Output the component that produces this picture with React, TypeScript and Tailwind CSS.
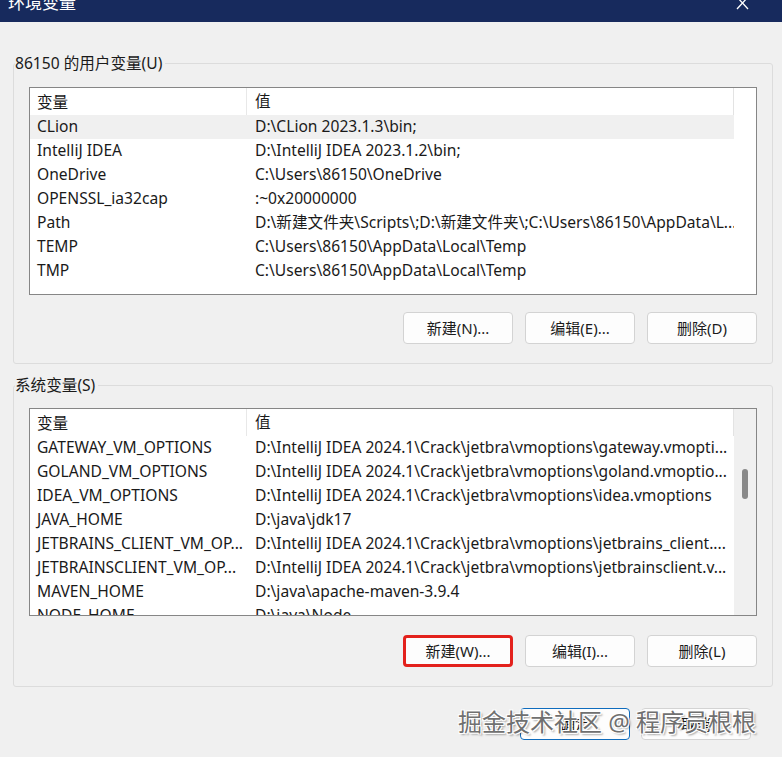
import type {ReactNode} from 'react'

type Row = [string, string]

const userVars: Row[] = [
  ['CLion', 'D:\\CLion 2023.1.3\\bin;'],
  ['IntelliJ IDEA', 'D:\\IntelliJ IDEA 2023.1.2\\bin;'],
  ['OneDrive', 'C:\\Users\\86150\\OneDrive'],
  ['OPENSSL_ia32cap', ':~0x20000000'],
  ['Path', 'D:\\新建文件夹\\Scripts\\;D:\\新建文件夹\\;C:\\Users\\86150\\AppData\\L...'],
  ['TEMP', 'C:\\Users\\86150\\AppData\\Local\\Temp'],
  ['TMP', 'C:\\Users\\86150\\AppData\\Local\\Temp'],
]

const systemVars: Row[] = [
  ['GATEWAY_VM_OPTIONS', 'D:\\IntelliJ IDEA 2024.1\\Crack\\jetbra\\vmoptions\\gateway.vmopti...'],
  ['GOLAND_VM_OPTIONS', 'D:\\IntelliJ IDEA 2024.1\\Crack\\jetbra\\vmoptions\\goland.vmoptio...'],
  ['IDEA_VM_OPTIONS', 'D:\\IntelliJ IDEA 2024.1\\Crack\\jetbra\\vmoptions\\idea.vmoptions'],
  ['JAVA_HOME', 'D:\\java\\jdk17'],
  ['JETBRAINS_CLIENT_VM_OP...', 'D:\\IntelliJ IDEA 2024.1\\Crack\\jetbra\\vmoptions\\jetbrains_client....'],
  ['JETBRAINSCLIENT_VM_OP...', 'D:\\IntelliJ IDEA 2024.1\\Crack\\jetbra\\vmoptions\\jetbrainsclient.v...'],
  ['MAVEN_HOME', 'D:\\java\\apache-maven-3.9.4'],
  ['NODE_HOME', 'D:\\java\\Node'],
]

function VarList({rows, selected, scroll}: {rows: Row[]; selected?: number; scroll?: boolean}) {
  return (
    <div className="flex h-[208px] w-[728px] overflow-hidden border border-[#868686] bg-white">
      <div className="min-w-0 flex-1">
        <div className="flex h-[27px] items-center border-r border-[#e3e3e3]">
          <div className="h-full w-[217px] border-r border-[#e8e8e8] px-[7px] leading-[28px]">变量</div>
          <div className="px-[8px]">值</div>
        </div>
        {rows.map(([name, value], i) => (
          <div
            key={name}
            className={`flex h-[24px] items-center whitespace-nowrap ${i === selected ? 'bg-[#f0f0f0]' : ''}`}
          >
            <div className="w-[217px] shrink-0 overflow-hidden px-[7px]">{name}</div>
            <div className="min-w-0 overflow-hidden px-[8px]">{value}</div>
          </div>
        ))}
      </div>
      <div className={`relative w-[22px] shrink-0 ${scroll ? 'bg-[#f0f0f0]' : ''}`}>
        {scroll && <div className="absolute left-[8px] top-[60px] h-[30px] w-[6px] rounded-[3px] bg-[#898989]" />}
      </div>
    </div>
  )
}

function Btn({children, highlight}: {children: ReactNode; highlight?: boolean}) {
  return (
    <button
      className={`h-[32px] w-[110px] rounded-[4px] bg-[#fdfdfd] text-[15px] text-[#1b1b1b] ${
        highlight ? 'border-[3px] border-[#e3211c]' : 'border border-[#d3d3d3]'
      }`}
    >
      {children}
    </button>
  )
}

function Group({title, className, children}: {title: string; className?: string; children: ReactNode}) {
  return (
    <fieldset className={`mx-[13px] rounded-[3px] border border-[#dcdcdc] px-[15px] pb-[19px] ${className ?? ''}`}>
      <legend className="-ml-[14px] pr-[3px] text-[15.6px] leading-[20px]">{title}</legend>
      {children}
    </fieldset>
  )
}

export default function App() {
  return (
    <div
      className="relative h-[757px] w-[782px] overflow-hidden bg-[#f0f0f0] text-[15.6px] text-[#1a1a1a]"
      style={{fontFamily: '"Noto Sans", "Noto Sans CJK SC", sans-serif'}}
    >
      <div className="flex h-[22px] items-start justify-between overflow-hidden bg-[#172a5d] pl-[8px] pr-[33px] text-white">
        <span className="-mt-[8px] text-[17px] leading-[22px]">环境变量</span>
        <svg width="13" height="14" viewBox="0 0 13 14" className="-mt-[4px]" stroke="white" strokeWidth="1.3">
          <path d="M1 1 L12 13 M12 1 L1 13" />
        </svg>
      </div>

      <Group title="86150 的用户变量(U)" className="mt-[31px]">
        <div className="mt-[14px]">
          <VarList rows={userVars} selected={0} />
        </div>
        <div className="mt-[17px] flex justify-end gap-[12px]">
          <Btn>新建(N)...</Btn>
          <Btn>编辑(E)...</Btn>
          <Btn>删除(D)</Btn>
        </div>
      </Group>

      <Group title="系统变量(S)" className="mt-[11px]">
        <div className="mt-[13px]">
          <VarList rows={systemVars} scroll />
        </div>
        <div className="mt-[19px] flex justify-end gap-[12px]">
          <Btn highlight>新建(W)...</Btn>
          <Btn>编辑(I)...</Btn>
          <Btn>删除(L)</Btn>
        </div>
      </Group>

      <div className="mt-[21px] flex justify-end gap-[11px] pr-[31px]">
        <button className="h-[32px] w-[110px] rounded-[4px] border-[1.5px] border-[#0f6cbd] bg-[#fdfdfd] text-[15px]">确定</button>
        <button className="h-[32px] w-[110px] rounded-[4px] border border-[#d3d3d3] bg-[#fdfdfd] text-[15px]">取消</button>
      </div>

      {/* site watermark */}
      <div
        className="absolute left-[458px] top-[706px] whitespace-nowrap text-[24px] leading-[32px] text-[#707070]"
        style={{textShadow: '1px 1px 0 #fff, -1px -1px 0 #fff, 1px -1px 0 #fff, -1px 1px 0 #fff, 2px 2px 2px rgba(0,0,0,0.35)'}}
      >
        掘金技术社区 @ 程序员根根
      </div>
    </div>
  )
}
